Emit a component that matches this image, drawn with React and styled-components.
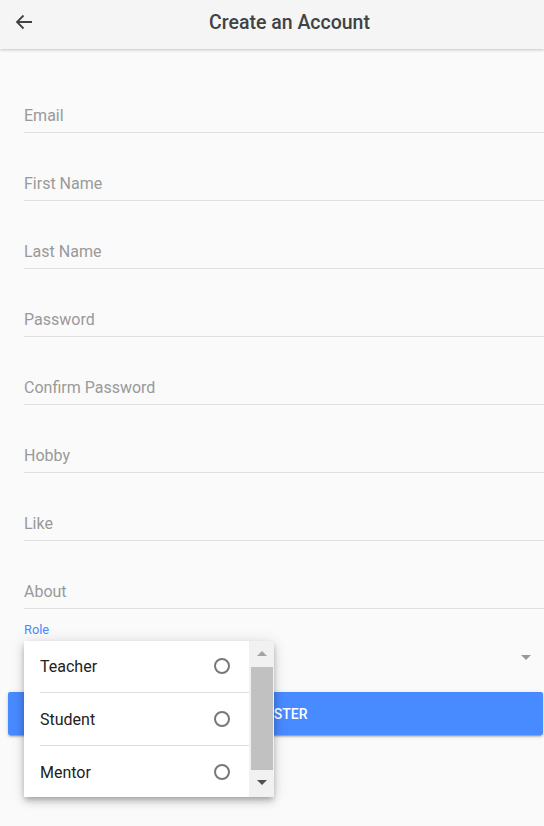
import styled, { createGlobalStyle } from 'styled-components';

const GlobalStyle = createGlobalStyle`
  html, body {
    margin: 0;
    padding: 0;
    background: #fafafa;
    font-family: Roboto, "Liberation Sans", sans-serif;
  }
`;

const Page = styled.div`
  position: relative;
  width: 544px;
  height: 826px;
  overflow: hidden;
  background: #fafafa;
`;

const Header = styled.header`
  display: flex;
  align-items: center;
  box-sizing: border-box;
  height: 49px;
  padding-bottom: 5px;
  background: #f5f5f5;
  box-shadow: 0 1px 3px rgba(0, 0, 0, 0.22);
  position: relative;
  z-index: 1;
`;

const BackButton = styled.button`
  display: flex;
  align-items: center;
  justify-content: center;
  width: 48px;
  height: 44px;
  padding: 0;
  border: none;
  background: transparent;
  color: #424242;
`;

const Title = styled.h1`
  flex: 1;
  margin: 0;
  padding-right: 13px;
  text-align: center;
  font-size: 19.5px;
  font-weight: 500;
  color: #424242;
`;

const Form = styled.form`
  display: flex;
  flex-direction: column;
  padding-top: 16px;
`;

const Field = styled.div`
  display: flex;
  align-items: flex-end;
  box-sizing: border-box;
  height: 68px;
  margin-left: 24px;
  padding-bottom: 6px;
  border-bottom: 1px solid #dedede;
`;

const Placeholder = styled.span`
  font-size: 16px;
  line-height: 20px;
  color: #999;
`;

const RoleItem = styled.div`
  display: flex;
  flex-direction: column;
  margin-left: 24px;
  padding-top: 13px;
  height: 71px;
  box-sizing: border-box;
`;

const FloatingLabel = styled.label`
  font-size: 12.8px;
  line-height: 16px;
  color: #488aff;
`;

const SelectRow = styled.div`
  display: flex;
  justify-content: flex-end;
  align-items: center;
  height: 38px;
  padding-right: 13px;
`;

const Caret = styled.span`
  width: 0;
  height: 0;
  border-left: 5px solid transparent;
  border-right: 5px solid transparent;
  border-top: 5px solid ${(p) => p.color || '#999'};
`;

const UpCaret = styled.span`
  width: 0;
  height: 0;
  border-left: 5px solid transparent;
  border-right: 5px solid transparent;
  border-bottom: 5px solid ${(p) => p.color || '#a3a3a3'};
`;

const RegisterButton = styled.button`
  margin: 12px 1px 0 8px;
  height: 43px;
  padding: 0;
  border: none;
  border-radius: 2px;
  background: #488aff;
  color: #fff;
  font-family: Roboto, "Liberation Sans", sans-serif;
  font-size: 14px;
  font-weight: 500;
  text-transform: uppercase;
  box-shadow: 0 2px 2px 0 rgba(0, 0, 0, 0.14), 0 3px 1px -2px rgba(0, 0, 0, 0.2),
    0 1px 5px 0 rgba(0, 0, 0, 0.12);
`;

const Popover = styled.div`
  position: absolute;
  left: 24px;
  top: 641px;
  width: 250px;
  height: 156px;
  display: flex;
  overflow: hidden;
  background: #fff;
  box-shadow: 0 3px 5px -1px rgba(0, 0, 0, 0.2), 0 5px 8px 0 rgba(0, 0, 0, 0.14),
    0 1px 14px 0 rgba(0, 0, 0, 0.12);
  z-index: 2;
`;

const OptionList = styled.div`
  flex: 1;
  display: flex;
  flex-direction: column;
  margin-top: -1px;
`;

const Option = styled.div`
  display: flex;
  align-items: center;
  justify-content: space-between;
  flex-shrink: 0;
  height: 53px;
  margin-left: 16px;
  padding-right: 18px;
  box-sizing: border-box;
  border-bottom: 1px solid ${(p) => (p.last ? 'transparent' : '#dedede')};
`;

const OptionText = styled.span`
  font-size: 16px;
  color: #222;
`;

const Radio = styled.span`
  width: 16px;
  height: 16px;
  box-sizing: border-box;
  margin-right: 1px;
  border: 2px solid #787878;
  border-radius: 50%;
`;

const ScrollTrack = styled.div`
  width: 25px;
  display: flex;
  flex-direction: column;
  align-items: center;
  background: #f1f1f1;
`;

const ArrowCell = styled.div`
  height: 25px;
  display: flex;
  align-items: center;
  justify-content: center;
  width: 100%;
`;

const Thumb = styled.div`
  width: 22px;
  height: 103px;
  margin-top: 1px;
  background: #c1c1c1;
`;

const options = ['Teacher', 'Student', 'Mentor'];
const fields = ['Email', 'First Name', 'Last Name', 'Password', 'Confirm Password', 'Hobby', 'Like', 'About'];

export default function App() {
  return (
    <Page>
      <GlobalStyle />
      <Header>
        <BackButton>
          <svg width="18" height="16" viewBox="0 0 18 16" fill="none" stroke="#424242" strokeWidth="1.8">
            <path d="M17 8H2M8.5 1.5L2 8l6.5 6.5" />
          </svg>
        </BackButton>
        <Title>Create an Account</Title>
      </Header>
      <Form>
        {fields.map((f) => (
          <Field key={f}>
            <Placeholder>{f}</Placeholder>
          </Field>
        ))}
        <RoleItem>
          <FloatingLabel>Role</FloatingLabel>
          <SelectRow>
            <Caret />
          </SelectRow>
        </RoleItem>
        <RegisterButton type="button">Register</RegisterButton>
      </Form>
      <Popover>
        <OptionList>
          {options.map((o, i) => (
            <Option key={o} last={i === options.length - 1}>
              <OptionText>{o}</OptionText>
              <Radio />
            </Option>
          ))}
        </OptionList>
        <ScrollTrack>
          <ArrowCell>
            <UpCaret />
          </ArrowCell>
          <Thumb />
          <ArrowCell>
            <Caret color="#505050" />
          </ArrowCell>
        </ScrollTrack>
      </Popover>
    </Page>
  );
}
